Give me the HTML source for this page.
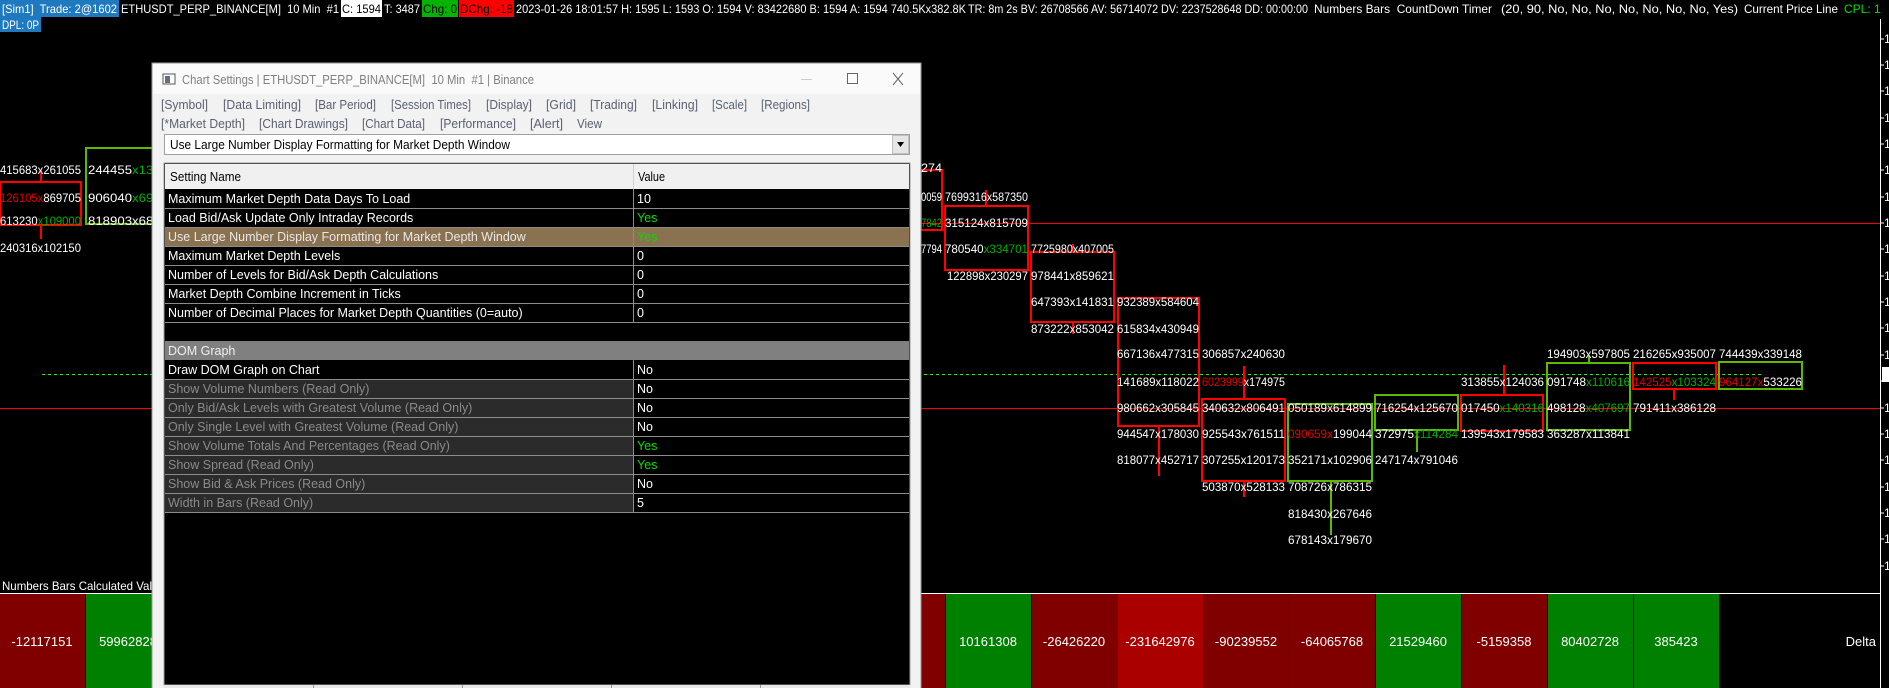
<!DOCTYPE html>
<html><head><meta charset="utf-8"><style>
html,body{margin:0;padding:0;background:#000;overflow:hidden}
svg{display:block}
text{font-family:"Liberation Sans",sans-serif;white-space:pre}
</style></head><body>
<svg width="1889" height="688" viewBox="0 0 1889 688" xmlns="http://www.w3.org/2000/svg">
<rect width="1889" height="688" fill="#000"/>

<!-- top status bar -->
<rect x="0" y="0" width="119" height="17" fill="#1f79bf"/>
<rect x="341" y="0" width="41" height="17" fill="#fff"/>
<rect x="422" y="0" width="36" height="17" fill="#00b400"/>
<rect x="459" y="0" width="55" height="17" fill="#ff0000"/>
<rect x="0" y="17" width="41" height="15" fill="#1f79bf"/>
<g font-size="12" fill="#fff">
<text x="2" y="13" textLength="115" lengthAdjust="spacingAndGlyphs">[Sim1]  Trade: 2@1602</text>
<text x="121" y="13" textLength="218" lengthAdjust="spacingAndGlyphs">ETHUSDT_PERP_BINANCE[M]  10 Min  #1</text>
<text x="342" y="13" fill="#000" textLength="39" lengthAdjust="spacingAndGlyphs">C: 1594</text>
<text x="384" y="13" textLength="36" lengthAdjust="spacingAndGlyphs">T: 3487</text>
<text x="423" y="13" fill="#000" textLength="34" lengthAdjust="spacingAndGlyphs">Chg: 0</text>
<text x="460" y="13" fill="#000" textLength="53" lengthAdjust="spacingAndGlyphs">DChg: -18</text>
<text x="516" y="13" textLength="450" lengthAdjust="spacingAndGlyphs">2023-01-26 18:01:57 H: 1595 L: 1593 O: 1594 V: 83422680 B: 1594 A: 1594 740.5Kx382.8K</text>
<text x="968" y="13" textLength="340" lengthAdjust="spacingAndGlyphs">TR: 8m 2s BV: 26708566 AV: 56714072 DV: 2237528648 DD: 00:00:00</text>
<text x="1314" y="13" textLength="178" lengthAdjust="spacingAndGlyphs">Numbers Bars  CountDown Timer</text>
<text x="1501" y="13" textLength="237" lengthAdjust="spacingAndGlyphs">(20, 90, No, No, No, No, No, No, No, Yes)</text>
<text x="1744" y="13" textLength="94" lengthAdjust="spacingAndGlyphs">Current Price Line</text>
<text x="1844" y="13" fill="#00e000">CPL: 1</text>
<text x="2" y="29" textLength="37" lengthAdjust="spacingAndGlyphs">DPL: 0P</text>
</g>

<!-- price axis -->
<line x1="1880.5" y1="19" x2="1880.5" y2="688" stroke="#fff"/>
<g stroke="#fff">
<line x1="1880" y1="39" x2="1884" y2="39"/><line x1="1880" y1="65" x2="1884" y2="65"/><line x1="1880" y1="91" x2="1884" y2="91"/><line x1="1880" y1="118" x2="1884" y2="118"/><line x1="1880" y1="144" x2="1884" y2="144"/><line x1="1880" y1="170" x2="1884" y2="170"/><line x1="1880" y1="197" x2="1884" y2="197"/><line x1="1880" y1="223" x2="1884" y2="223"/><line x1="1880" y1="249" x2="1884" y2="249"/><line x1="1880" y1="276" x2="1884" y2="276"/><line x1="1880" y1="302" x2="1884" y2="302"/><line x1="1880" y1="328" x2="1884" y2="328"/><line x1="1880" y1="355" x2="1884" y2="355"/><line x1="1880" y1="381" x2="1884" y2="381"/><line x1="1880" y1="408" x2="1884" y2="408"/><line x1="1880" y1="434" x2="1884" y2="434"/><line x1="1880" y1="460" x2="1884" y2="460"/><line x1="1880" y1="487" x2="1884" y2="487"/><line x1="1880" y1="513" x2="1884" y2="513"/><line x1="1880" y1="539" x2="1884" y2="539"/><line x1="1880" y1="566" x2="1884" y2="566"/>
</g>
<g font-size="12" fill="#fff">
<text x="1884" y="43">1</text><text x="1884" y="69">1</text><text x="1884" y="95">1</text><text x="1884" y="122">1</text><text x="1884" y="148">1</text><text x="1884" y="174">1</text><text x="1884" y="201">1</text><text x="1884" y="227">1</text><text x="1884" y="253">1</text><text x="1884" y="280">1</text><text x="1884" y="306">1</text><text x="1884" y="332">1</text><text x="1884" y="359">1</text><text x="1884" y="412">1</text><text x="1884" y="438">1</text><text x="1884" y="464">1</text><text x="1884" y="491">1</text><text x="1884" y="517">1</text><text x="1884" y="543">1</text><text x="1884" y="570">1</text>
</g>
<rect x="1882" y="367" width="7" height="15" fill="#fff"/>

<!-- horizontal lines -->
<line x1="921" y1="223.5" x2="1880" y2="223.5" stroke="#ff0000"/>
<line x1="0" y1="408.5" x2="1880" y2="408.5" stroke="#ff0000"/>
<line x1="42" y1="374.5" x2="1762" y2="374.5" stroke="#22ee22" stroke-dasharray="3,3"/>

<!-- left bars -->
<line x1="41" y1="170" x2="41" y2="182" stroke="#ff0000" stroke-width="2"/>
<line x1="41" y1="225" x2="41" y2="239" stroke="#ff0000" stroke-width="2"/>
<rect x="0" y="182" width="81" height="43" fill="none" stroke="#ff0000" stroke-width="2"/>
<rect x="86" y="148" width="80" height="76" fill="none" stroke="#5cb800" stroke-width="2"/>
<g font-size="12" fill="#fff">
<text x="0" y="174" textLength="81" lengthAdjust="spacingAndGlyphs">415683x261055</text>
<text x="0" y="202" textLength="81" lengthAdjust="spacingAndGlyphs"><tspan fill="#e00000">126105x</tspan>869705</text>
<text x="0" y="225" textLength="81" lengthAdjust="spacingAndGlyphs">613230<tspan fill="#00b000">x109000</tspan></text>
<text x="0" y="252" textLength="81" lengthAdjust="spacingAndGlyphs">240316x102150</text>
<text x="88" y="174" textLength="80" lengthAdjust="spacingAndGlyphs">244455<tspan fill="#00b000">x1397</tspan></text>
<text x="88" y="202" textLength="80" lengthAdjust="spacingAndGlyphs">906040<tspan fill="#00b000">x6933</tspan></text>
<text x="88" y="225" textLength="80" lengthAdjust="spacingAndGlyphs">818903x6877</text>
</g>

<!-- right bars -->
<g fill="none" stroke-width="2">
<rect x="921" y="170" width="21" height="60" stroke="#ff0000"/>
<line x1="986" y1="190" x2="986" y2="206" stroke="#ff0000"/>
<rect x="945" y="206" width="83" height="64" stroke="#ff0000"/>
<line x1="1073" y1="244" x2="1073" y2="252" stroke="#ff0000"/>
<line x1="1073" y1="322" x2="1073" y2="334" stroke="#ff0000"/>
<rect x="1031" y="252" width="83" height="70" stroke="#ff0000"/>
<line x1="1159" y1="426" x2="1159" y2="476" stroke="#ff0000"/>
<rect x="1118" y="298" width="81" height="128" stroke="#ff0000"/>
<line x1="1244" y1="366" x2="1244" y2="399" stroke="#ff0000"/>
<line x1="1244" y1="481" x2="1244" y2="497" stroke="#ff0000"/>
<rect x="1202" y="399" width="83" height="82" stroke="#ff0000"/>
<line x1="1331" y1="481" x2="1331" y2="535" stroke="#5cb800"/>
<rect x="1288" y="404" width="84" height="77" stroke="#5cb800"/>
<line x1="1417" y1="430" x2="1417" y2="452" stroke="#5cb800"/>
<rect x="1375" y="395" width="83" height="35" stroke="#5cb800"/>
<line x1="1504" y1="365" x2="1504" y2="395" stroke="#ff0000"/>
<rect x="1461" y="395" width="82" height="36" stroke="#ff0000"/>
<line x1="1589" y1="356" x2="1589" y2="363" stroke="#5cb800"/>
<rect x="1547" y="363" width="83" height="67" stroke="#5cb800"/>
<line x1="1674" y1="389" x2="1674" y2="400" stroke="#ff0000"/>
<rect x="1633" y="363" width="83" height="26" stroke="#ff0000"/>
<rect x="1719" y="362" width="83" height="27" stroke="#5cb800"/>
</g>
<g font-size="12" fill="#fff">
<text x="921" y="172" textLength="21" lengthAdjust="spacingAndGlyphs">274</text>
<text x="921" y="201" textLength="21" lengthAdjust="spacingAndGlyphs">0059</text>
<text x="921" y="227" textLength="21" lengthAdjust="spacingAndGlyphs" fill="#00b000">7842</text>
<text x="921" y="253" textLength="21" lengthAdjust="spacingAndGlyphs">7794</text>

<text x="945" y="201" textLength="83" lengthAdjust="spacingAndGlyphs">7699316x587350</text>
<text x="945" y="227" textLength="83" lengthAdjust="spacingAndGlyphs">315124x815709</text>
<text x="945" y="253" textLength="83" lengthAdjust="spacingAndGlyphs">780540<tspan fill="#00b000">x334701</tspan></text>
<text x="947" y="280" textLength="81" lengthAdjust="spacingAndGlyphs">122898x230297</text>

<text x="1031" y="253" textLength="83" lengthAdjust="spacingAndGlyphs">7725980x407005</text>
<text x="1031" y="280" textLength="83" lengthAdjust="spacingAndGlyphs">978441x859621</text>
<text x="1031" y="306" textLength="83" lengthAdjust="spacingAndGlyphs">647393x141831</text>
<text x="1031" y="333" textLength="83" lengthAdjust="spacingAndGlyphs">873222x853042</text>

<text x="1117" y="306" textLength="82" lengthAdjust="spacingAndGlyphs">932389x584604</text>
<text x="1117" y="333" textLength="82" lengthAdjust="spacingAndGlyphs">615834x430949</text>
<text x="1117" y="358" textLength="82" lengthAdjust="spacingAndGlyphs">667136x477315</text>
<text x="1117" y="386" textLength="82" lengthAdjust="spacingAndGlyphs">141689x118022</text>
<text x="1117" y="412" textLength="82" lengthAdjust="spacingAndGlyphs">980662x305845</text>
<text x="1117" y="438" textLength="82" lengthAdjust="spacingAndGlyphs">944547x178030</text>
<text x="1117" y="464" textLength="82" lengthAdjust="spacingAndGlyphs">818077x452717</text>

<text x="1202" y="358" textLength="83" lengthAdjust="spacingAndGlyphs">306857x240630</text>
<text x="1202" y="386" textLength="83" lengthAdjust="spacingAndGlyphs"><tspan fill="#e00000">6023999</tspan>x174975</text>
<text x="1202" y="412" textLength="83" lengthAdjust="spacingAndGlyphs">340632x806491</text>
<text x="1202" y="438" textLength="83" lengthAdjust="spacingAndGlyphs">925543x761511</text>
<text x="1202" y="464" textLength="83" lengthAdjust="spacingAndGlyphs">307255x120173</text>
<text x="1202" y="491" textLength="83" lengthAdjust="spacingAndGlyphs">503870x528133</text>

<text x="1288" y="412" textLength="84" lengthAdjust="spacingAndGlyphs">050189x614899</text>
<text x="1288" y="438" textLength="84" lengthAdjust="spacingAndGlyphs"><tspan fill="#e00000">090659x</tspan>199044</text>
<text x="1288" y="464" textLength="84" lengthAdjust="spacingAndGlyphs">352171x102906</text>
<text x="1288" y="491" textLength="84" lengthAdjust="spacingAndGlyphs">708726x786315</text>
<text x="1288" y="518" textLength="84" lengthAdjust="spacingAndGlyphs">818430x267646</text>
<text x="1288" y="544" textLength="84" lengthAdjust="spacingAndGlyphs">678143x179670</text>

<text x="1375" y="412" textLength="83" lengthAdjust="spacingAndGlyphs">716254x125670</text>
<text x="1375" y="438" textLength="83" lengthAdjust="spacingAndGlyphs">372975<tspan fill="#00b000">x114284</tspan></text>
<text x="1375" y="464" textLength="83" lengthAdjust="spacingAndGlyphs">247174x791046</text>

<text x="1461" y="386" textLength="83" lengthAdjust="spacingAndGlyphs">313855x124036</text>
<text x="1461" y="412" textLength="83" lengthAdjust="spacingAndGlyphs">017450<tspan fill="#00b000">x140316</tspan></text>
<text x="1461" y="438" textLength="83" lengthAdjust="spacingAndGlyphs">139543x179583</text>

<text x="1547" y="358" textLength="83" lengthAdjust="spacingAndGlyphs">194903x597805</text>
<text x="1547" y="386" textLength="83" lengthAdjust="spacingAndGlyphs">091748<tspan fill="#00b000">x110616</tspan></text>
<text x="1547" y="412" textLength="83" lengthAdjust="spacingAndGlyphs">498128<tspan fill="#00b000">x407697</tspan></text>
<text x="1547" y="438" textLength="83" lengthAdjust="spacingAndGlyphs">363287x113841</text>

<text x="1633" y="358" textLength="83" lengthAdjust="spacingAndGlyphs">216265x935007</text>
<text x="1633" y="386" textLength="83" lengthAdjust="spacingAndGlyphs"><tspan fill="#e00000">142525</tspan><tspan fill="#00b000">x103324</tspan></text>
<text x="1633" y="412" textLength="83" lengthAdjust="spacingAndGlyphs">791411x386128</text>

<text x="1719" y="358" textLength="83" lengthAdjust="spacingAndGlyphs">744439x339148</text>
<text x="1719" y="386" textLength="83" lengthAdjust="spacingAndGlyphs"><tspan fill="#e00000">964127x</tspan>533226</text>
</g>

<!-- bottom panel -->
<text x="2" y="590" font-size="12" fill="#fff" textLength="150" lengthAdjust="spacingAndGlyphs">Numbers Bars Calculated Val</text>
<line x1="0" y1="593.5" x2="1880" y2="593.5" stroke="#fff"/>
<g>
<rect x="0" y="594" width="85" height="94" fill="#800000"/>
<rect x="86" y="594" width="85" height="94" fill="#008000"/>
<rect x="920" y="594" width="25" height="94" fill="#800000"/>
<rect x="946" y="594" width="85" height="94" fill="#008000"/>
<rect x="1032" y="594" width="85" height="94" fill="#800000"/>
<rect x="1118" y="594" width="85" height="94" fill="#aa0000"/>
<rect x="1204" y="594" width="85" height="94" fill="#800000"/>
<rect x="1290" y="594" width="85" height="94" fill="#800000"/>
<rect x="1376" y="594" width="85" height="94" fill="#008000"/>
<rect x="1462" y="594" width="85" height="94" fill="#800000"/>
<rect x="1548" y="594" width="85" height="94" fill="#008000"/>
<rect x="1634" y="594" width="85" height="94" fill="#008000"/>
</g>
<g font-size="13" fill="#fff" text-anchor="middle">
<text x="42" y="646">-12117151</text>
<text x="128" y="646">59962828</text>
<text x="988" y="646">10161308</text>
<text x="1074" y="646">-26426220</text>
<text x="1160" y="646">-231642976</text>
<text x="1246" y="646">-90239552</text>
<text x="1332" y="646">-64065768</text>
<text x="1418" y="646">21529460</text>
<text x="1504" y="646">-5159358</text>
<text x="1590" y="646">80402728</text>
<text x="1676" y="646">385423</text>
<text x="1876" y="646" text-anchor="end">Delta</text>
</g>

<!-- dialog -->
<rect x="152" y="63" width="769" height="630" fill="#f2f2f2" stroke="#9a9a9a"/>
<rect x="153" y="64" width="767" height="30" fill="#fafafa"/>
<rect x="163" y="74" width="12" height="10" fill="#fff" stroke="#555"/>
<rect x="165" y="76" width="5" height="7" fill="#607080"/>
<text x="182" y="84" font-size="13" fill="#808080" textLength="352" lengthAdjust="spacingAndGlyphs">Chart Settings | ETHUSDT_PERP_BINANCE[M]  10 Min  #1 | Binance</text>
<line x1="801" y1="79.5" x2="812" y2="79.5" stroke="#ccc"/>
<rect x="847.5" y="73.5" width="10" height="10" fill="none" stroke="#666"/>
<path d="M893 73 L903 85 M903 73 L893 85" stroke="#666" fill="none"/>
<g font-size="13" fill="#5a6070">
<text x="161" y="109" textLength="47" lengthAdjust="spacingAndGlyphs">[Symbol]</text>
<text x="223" y="109" textLength="78" lengthAdjust="spacingAndGlyphs">[Data Limiting]</text>
<text x="315" y="109" textLength="61" lengthAdjust="spacingAndGlyphs">[Bar Period]</text>
<text x="391" y="109" textLength="80" lengthAdjust="spacingAndGlyphs">[Session Times]</text>
<text x="486" y="109" textLength="46" lengthAdjust="spacingAndGlyphs">[Display]</text>
<text x="546" y="109" textLength="30" lengthAdjust="spacingAndGlyphs">[Grid]</text>
<text x="590" y="109" textLength="47" lengthAdjust="spacingAndGlyphs">[Trading]</text>
<text x="652" y="109" textLength="46" lengthAdjust="spacingAndGlyphs">[Linking]</text>
<text x="712" y="109" textLength="35" lengthAdjust="spacingAndGlyphs">[Scale]</text>
<text x="761" y="109" textLength="49" lengthAdjust="spacingAndGlyphs">[Regions]</text>
<text x="161" y="128" textLength="84" lengthAdjust="spacingAndGlyphs">[*Market Depth]</text>
<text x="259" y="128" textLength="89" lengthAdjust="spacingAndGlyphs">[Chart Drawings]</text>
<text x="362" y="128" textLength="63" lengthAdjust="spacingAndGlyphs">[Chart Data]</text>
<text x="440" y="128" textLength="76" lengthAdjust="spacingAndGlyphs">[Performance]</text>
<text x="530" y="128" textLength="33" lengthAdjust="spacingAndGlyphs">[Alert]</text>
<text x="577" y="128" textLength="25" lengthAdjust="spacingAndGlyphs">View</text>
</g>
<rect x="164.5" y="134.5" width="745" height="20" fill="#fff" stroke="#a0a0a0"/>
<rect x="892.5" y="135.5" width="16" height="18" fill="#e6e6e6" stroke="#c0c0c0"/>
<path d="M897 142 L904 142 L900.5 147 Z" fill="#000"/>
<text x="170" y="149" font-size="13" fill="#000" textLength="340" lengthAdjust="spacingAndGlyphs">Use Large Number Display Formatting for Market Depth Window</text>

<!-- table -->
<rect x="164" y="163" width="746" height="522" fill="#000" stroke="#a0a0a0"/>
<rect x="165" y="164" width="744" height="25" fill="#f0f0f0"/>
<line x1="633.5" y1="164" x2="633.5" y2="189" stroke="#d0d0d0"/>
<text x="170" y="181" font-size="13" fill="#000" textLength="71" lengthAdjust="spacingAndGlyphs">Setting Name</text>
<text x="638" y="181" font-size="13" fill="#000" textLength="27" lengthAdjust="spacingAndGlyphs">Value</text>
<rect x="165" y="227" width="744" height="19" fill="#8a7150"/>
<rect x="165" y="341" width="744" height="19" fill="#808080"/>
<rect x="165" y="379" width="468" height="133" fill="#2b2b2b"/>
<g stroke="#8c8c8c">
<line x1="165" y1="208.5" x2="909" y2="208.5"/><line x1="165" y1="227.5" x2="909" y2="227.5"/><line x1="165" y1="246.5" x2="909" y2="246.5"/><line x1="165" y1="265.5" x2="909" y2="265.5"/><line x1="165" y1="284.5" x2="909" y2="284.5"/><line x1="165" y1="303.5" x2="909" y2="303.5"/><line x1="165" y1="322.5" x2="909" y2="322.5"/>
<line x1="165" y1="379.5" x2="909" y2="379.5"/><line x1="165" y1="398.5" x2="909" y2="398.5"/><line x1="165" y1="417.5" x2="909" y2="417.5"/><line x1="165" y1="436.5" x2="909" y2="436.5"/><line x1="165" y1="455.5" x2="909" y2="455.5"/><line x1="165" y1="474.5" x2="909" y2="474.5"/><line x1="165" y1="493.5" x2="909" y2="493.5"/><line x1="165" y1="512.5" x2="909" y2="512.5"/>
<line x1="633.5" y1="189" x2="633.5" y2="322"/><line x1="633.5" y1="360" x2="633.5" y2="512"/>
</g>
<g font-size="12.5" fill="#fff">
<text x="168" y="203">Maximum Market Depth Data Days To Load</text><text x="637" y="203">10</text>
<text x="168" y="222">Load Bid/Ask Update Only Intraday Records</text><text x="637" y="222" fill="#00e000">Yes</text>
<text x="168" y="241" fill="#e8e8e8">Use Large Number Display Formatting for Market Depth Window</text><text x="637" y="241" fill="#00e000">Yes</text>
<text x="168" y="260">Maximum Market Depth Levels</text><text x="637" y="260">0</text>
<text x="168" y="279">Number of Levels for Bid/Ask Depth Calculations</text><text x="637" y="279">0</text>
<text x="168" y="298">Market Depth Combine Increment in Ticks</text><text x="637" y="298">0</text>
<text x="168" y="317">Number of Decimal Places for Market Depth Quantities (0=auto)</text><text x="637" y="317">0</text>
<text x="168" y="355" fill="#f0f0f0">DOM Graph</text>
<text x="168" y="374">Draw DOM Graph on Chart</text><text x="637" y="374">No</text>
<g fill="#8a8a8a">
<text x="168" y="393">Show Volume Numbers (Read Only)</text>
<text x="168" y="412">Only Bid/Ask Levels with Greatest Volume (Read Only)</text>
<text x="168" y="431">Only Single Level with Greatest Volume (Read Only)</text>
<text x="168" y="450">Show Volume Totals And Percentages (Read Only)</text>
<text x="168" y="469">Show Spread (Read Only)</text>
<text x="168" y="488">Show Bid &amp; Ask Prices (Read Only)</text>
<text x="168" y="507">Width in Bars (Read Only)</text>
</g>
<text x="637" y="393">No</text><text x="637" y="412">No</text><text x="637" y="431">No</text>
<text x="637" y="450" fill="#00e000">Yes</text><text x="637" y="469" fill="#00e000">Yes</text>
<text x="637" y="488">No</text><text x="637" y="507">5</text>
</g>
<rect x="164" y="685" width="746" height="3" fill="#e8e8e8"/>
<g stroke="#999"><line x1="313.5" y1="685" x2="313.5" y2="688"/><line x1="462.5" y1="685" x2="462.5" y2="688"/><line x1="611.5" y1="685" x2="611.5" y2="688"/><line x1="760.5" y1="685" x2="760.5" y2="688"/></g>
</svg>
</body></html>
